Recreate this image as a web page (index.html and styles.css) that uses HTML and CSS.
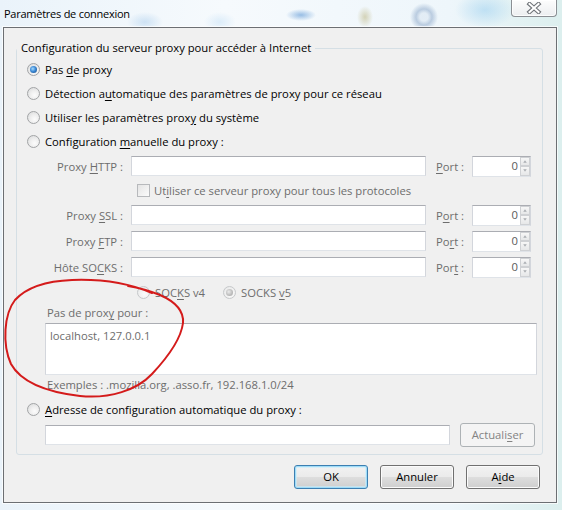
FILE: index.html
```html
<!DOCTYPE html>
<html lang="fr">
<head>
<meta charset="utf-8">
<title>Paramètres de connexion</title>
<link rel="stylesheet" href="styles.css">
</head>
<body>
<div class="frame">
  <div class="titlebar">
    <span class="title">Paramètres de connexion</span>
    <div class="close">
      <svg width="16" height="12" viewBox="0 0 16 12">
        <path d="M3.5 2 L12.5 10 M12.5 2 L3.5 10" stroke="#6f7378" stroke-width="4.2" stroke-linecap="square" fill="none"/>
        <path d="M3.5 2 L12.5 10 M12.5 2 L3.5 10" stroke="#ffffff" stroke-width="2" stroke-linecap="square" fill="none"/>
      </svg>
    </div>
  </div>
  <div class="client">
    <fieldset class="group">
      <legend>Configuration du serveur proxy pour accéder à Internet</legend>
      <div class="opts">
        <div class="rrow"><span class="radio on"></span><span>Pas <u>d</u>e proxy</span></div>
        <div class="rrow"><span class="radio"></span><span>Détection a<u>u</u>tomatique des paramètres de proxy pour ce réseau</span></div>
        <div class="rrow"><span class="radio"></span><span>Utiliser les paramètres prox<u>y</u> du système</span></div>
        <div class="rrow"><span class="radio"></span><span>Configuration <u>m</u>anuelle du proxy :</span></div>
      </div>
      <div class="prow first">
        <span class="plabel">Proxy <u>H</u>TTP :</span>
        <span class="tb host"></span>
        <span class="portlabel"><u>P</u>ort :</span>
        <span class="tb port"><span class="val">0</span><span class="spin"><i><svg width="8" height="8" viewBox="0 0 8 8"><path d="M2 5.5 L4 2.5 L6 5.5 Z" fill="#a9acb0"/></svg></i><i><svg width="8" height="8" viewBox="0 0 8 8"><path d="M2 2.5 L4 5.5 L6 2.5 Z" fill="#a9acb0"/></svg></i></span></span>
      </div>
      <div class="crow"><span class="cb"></span><span class="dis">Ut<u>i</u>liser ce serveur proxy pour tous les protocoles</span></div>
      <div class="prow">
        <span class="plabel">Proxy <u>S</u>SL :</span>
        <span class="tb host"></span>
        <span class="portlabel">P<u>o</u>rt :</span>
        <span class="tb port"><span class="val">0</span><span class="spin"><i><svg width="8" height="8" viewBox="0 0 8 8"><path d="M2 5.5 L4 2.5 L6 5.5 Z" fill="#a9acb0"/></svg></i><i><svg width="8" height="8" viewBox="0 0 8 8"><path d="M2 2.5 L4 5.5 L6 2.5 Z" fill="#a9acb0"/></svg></i></span></span>
      </div>
      <div class="prow gap">
        <span class="plabel">Proxy <u>F</u>TP :</span>
        <span class="tb host"></span>
        <span class="portlabel">Po<u>r</u>t :</span>
        <span class="tb port"><span class="val">0</span><span class="spin"><i><svg width="8" height="8" viewBox="0 0 8 8"><path d="M2 5.5 L4 2.5 L6 5.5 Z" fill="#a9acb0"/></svg></i><i><svg width="8" height="8" viewBox="0 0 8 8"><path d="M2 2.5 L4 5.5 L6 2.5 Z" fill="#a9acb0"/></svg></i></span></span>
      </div>
      <div class="prow gap">
        <span class="plabel">Hôte SO<u>C</u>KS :</span>
        <span class="tb host"></span>
        <span class="portlabel">Por<u>t</u> :</span>
        <span class="tb port"><span class="val">0</span><span class="spin"><i><svg width="8" height="8" viewBox="0 0 8 8"><path d="M2 5.5 L4 2.5 L6 5.5 Z" fill="#a9acb0"/></svg></i><i><svg width="8" height="8" viewBox="0 0 8 8"><path d="M2 2.5 L4 5.5 L6 2.5 Z" fill="#a9acb0"/></svg></i></span></span>
      </div>
      <div class="srow">
        <span class="radio off"></span><span class="dis">SOC<u>K</u>S v4</span>
        <span class="radio off on v5"></span><span class="dis">SOCKS <u>v</u>5</span>
      </div>
      <div class="noproxy-label dis">Pas de prox<u>y</u> pour :</div>
      <div class="tb area">localhost, 127.0.0.1</div>
      <div class="examples">Exemples : .mozilla.org, .asso.fr, 192.168.1.0/24</div>
      <div class="rrow auto"><span class="radio"></span><span><u>A</u>dresse de configuration automatique du proxy :</span></div>
      <div class="arow">
        <span class="tb autourl"></span>
        <span class="btn disabled">Actuali<u>s</u>er</span>
      </div>
    </fieldset>
    <div class="buttons">
      <span class="btn default">OK</span>
      <span class="btn">Annuler</span>
      <span class="btn">A<u>i</u>de</span>
    </div>
  </div>
  <svg class="annot" width="562" height="510" viewBox="0 0 562 510">
    <path d="M152 293 C128 283 98 279 72 280 C46 281 26 288 15 300 C4 314 2 344 11 364 C21 382 46 392 80 396 C110 399 137 390 152 374 C167 358 181 339 183 323 C184 311 176 302 160 295 C150 291 140 288 128 286" fill="none" stroke="#d41b1b" stroke-width="2" stroke-linecap="round"/>
  </svg>
</div>
</body>
</html>
```

FILE: styles.css
```css
* {
  box-sizing: border-box;
}

html,
body {
  margin: 0;
  padding: 0;
}

body {
  width: 562px;
  height: 510px;
  overflow: hidden;
  font-family: "Open Sans", "Noto Sans", sans-serif;
  font-size: 11.25px;
  letter-spacing: 0;
  color: #000;
}

u {
  text-decoration-thickness: 1px;
  text-underline-offset: 2px;
}

.frame {
  position: relative;
  width: 562px;
  height: 510px;
  background:
    radial-gradient(ellipse 15px 6px at 301px 15px, rgba(60, 130, 205, 0.5), rgba(60, 130, 205, 0) 100%),
    radial-gradient(ellipse 8px 11px at 365px 17px, rgba(175, 165, 100, 0.45), rgba(175, 165, 100, 0) 100%),
    radial-gradient(circle at 424px 17px, rgba(120, 150, 190, 0.1) 0, rgba(120, 150, 190, 0.1) 4px, rgba(100, 135, 180, 0.38) 8px, rgba(100, 135, 180, 0) 14px),
    radial-gradient(ellipse 30px 18px at 485px 10px, rgba(150, 205, 240, 0.5), rgba(150, 205, 240, 0) 100%),
    radial-gradient(ellipse 18px 10px at 145px 22px, rgba(120, 175, 225, 0.3), rgba(120, 175, 225, 0) 100%),
    radial-gradient(ellipse 16px 10px at 220px 22px, rgba(160, 205, 240, 0.3), rgba(160, 205, 240, 0) 100%),
    linear-gradient(90deg, #eaf3fa 0, #f6fafd 40%, #eef6fb 80%, #dcefee 100%);
}

.titlebar {
  height: 27px;
  display: flex;
  justify-content: space-between;
  align-items: flex-start;
}

.title {
  padding: 6px 0 0 4px;
  line-height: 16px;
  font-size: 11px;
  letter-spacing: -0.25px;
}

.close {
  width: 46px;
  height: 17px;
  margin-right: 5px;
  border: 1px solid #8b8f94;
  border-top: none;
  border-radius: 0 0 4px 4px;
  background: linear-gradient(#fdfdfd, #eceef0);
  box-shadow: inset 0 0 0 1px rgba(255, 255, 255, 0.8);
  display: flex;
  align-items: center;
  justify-content: center;
}

.client {
  margin-left: 3px;
  width: 554px;
  height: 476px;
  border: 1px solid #6c6f73;
  background: #f0f0f0;
  box-shadow: 0 0 0 1px rgba(255, 255, 255, 0.7);
  display: flex;
  flex-direction: column;
  align-items: flex-start;
}

.group {
  margin: 12px 0 0 12px;
  width: 527px;
  padding: 0 0 7px 0;
  border: 1px solid #d5dfe5;
  border-radius: 3px;
  min-width: 0;
}

.group legend {
  padding: 0 4px;
  line-height: 16px;
}

.opts {
  padding-top: 1px;
}

.rrow {
  height: 24px;
  display: flex;
  align-items: center;
  gap: 5px;
  padding-left: 10px;
}

.radio {
  flex: none;
  width: 13px;
  height: 13px;
  border-radius: 50%;
  border: 1px solid #a2a4a6;
  background: radial-gradient(circle at 60% 65%, #fcfcfc 0, #eeeeee 45%, #d6d7d8 100%);
  display: flex;
  align-items: center;
  justify-content: center;
}

.radio.on::after {
  content: "";
  width: 7px;
  height: 7px;
  border-radius: 50%;
  background: radial-gradient(circle at 40% 40%, #a6dcff 0, #3d8ad6 45%, #12457e 100%);
}

.radio.off {
  border-color: #c6c8ca;
  background: radial-gradient(circle at 60% 65%, #fbfbfb 0, #f1f1f1 50%, #e3e4e5 100%);
}

.radio.off.on::after {
  background: radial-gradient(circle at 40% 40%, #ececec 0, #c2c2c2 50%, #a0a0a0 100%);
}

.dis,
.plabel,
.portlabel {
  color: #6d6d6d;
}

.prow {
  height: 20px;
  display: flex;
  align-items: center;
  margin-left: 22px;
}

.prow.first {
  margin-top: 3px;
}

.prow.gap {
  margin-top: 6px;
}

.plabel {
  width: 84px;
  text-align: right;
  margin-right: 8px;
  white-space: nowrap;
}

.tb {
  display: block;
  background: #fff;
  border: 1px solid;
  border-color: #abadb3 #d3d6dc #dfe3e8 #d3d6dc;
}

.host {
  width: 295px;
  height: 20px;
}

.portlabel {
  width: 36px;
  margin-left: 10px;
  white-space: nowrap;
}

.port {
  width: 59px;
  height: 21px;
  display: flex;
}

.port .val {
  flex: 1;
  text-align: right;
  padding-right: 2px;
  line-height: 18px;
  color: #5a5a5a;
}

.spin {
  width: 10px;
  display: flex;
  flex-direction: column;
}

.spin i {
  flex: 1;
  border: 1px solid #cfd1d4;
  background: linear-gradient(#f7f7f7, #e6e7e8);
  display: flex;
  align-items: center;
  justify-content: center;
}

.spin i svg {
  display: block;
  width: 8px;
  height: 7px;
}

.crow {
  height: 29px;
  display: flex;
  align-items: center;
  gap: 4px;
  margin-left: 120px;
}

.cb {
  flex: none;
  width: 13px;
  height: 13px;
  border: 1px solid #b7b9bc;
  background: linear-gradient(135deg, #e4e4e4, #fbfbfb);
}

.srow {
  margin-top: 3px;
  height: 24px;
  display: flex;
  align-items: center;
  padding-left: 120px;
}

.srow .dis {
  margin-left: 5px;
}

.srow .v5 {
  margin-left: 18px;
}

.noproxy-label {
  margin-top: 1px;
  height: 16px;
  line-height: 16px;
  padding-left: 30px;
}

.area {
  margin: 2px 0 0 28px;
  width: 492px;
  height: 52px;
  padding: 4px 4px;
  line-height: 16px;
  color: #6d6d6d;
}

.examples {
  margin-top: 2px;
  height: 16px;
  line-height: 16px;
  padding-left: 30px;
  color: #6d6d6d;
}

.rrow.auto {
  margin-top: 4px;
}

.arow {
  margin: 1px 0 0 28px;
  height: 25px;
  display: flex;
  align-items: center;
  gap: 10px;
}

.autourl {
  width: 405px;
  height: 20px;
}

.btn {
  flex: none;
  width: 74px;
  height: 24px;
  border: 1px solid #707070;
  border-radius: 3px;
  background: linear-gradient(#f2f2f2 0, #ebebeb 48%, #dddddd 52%, #cfcfcf 100%);
  box-shadow: inset 0 0 0 1px #fbfbfb;
  display: flex;
  align-items: center;
  justify-content: center;
  line-height: 16px;
}

.btn.disabled {
  width: 75px;
  border-color: #adb2b5;
  background: #f4f4f4;
  box-shadow: none;
  color: #838383;
}

.btn.default {
  border-color: #3c7fb1;
  box-shadow: inset 0 0 0 1px #9fdcf8, inset 0 0 0 2px rgba(200, 236, 252, 0.6);
}

.buttons {
  align-self: flex-end;
  margin: 10px 16px 0 0;
  display: flex;
  gap: 12px;
}

.annot {
  position: absolute;
  left: 0;
  top: 0;
  pointer-events: none;
}
```
